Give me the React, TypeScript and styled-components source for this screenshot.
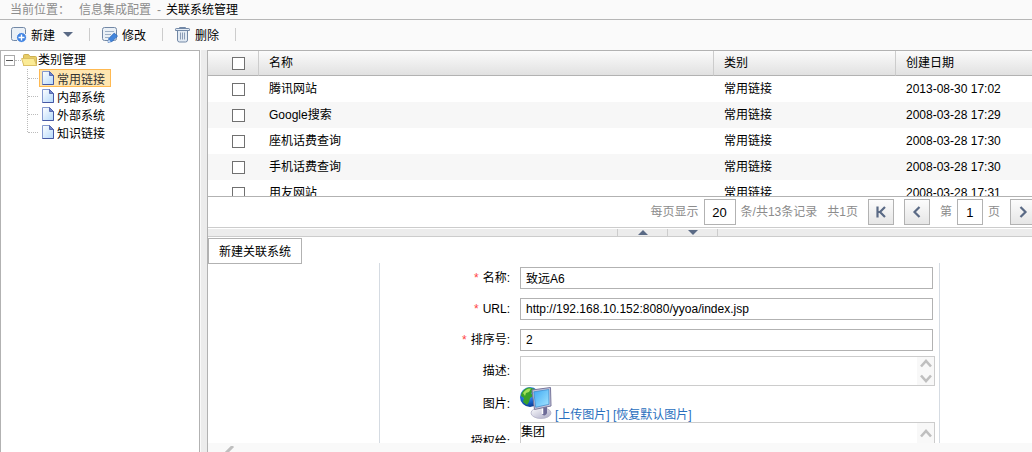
import React from "react";
import styled, { createGlobalStyle, css } from "styled-components";

const GlobalStyle = createGlobalStyle`
  * { box-sizing: border-box; }
  html, body { margin: 0; }
  body, button, input, textarea {
    font-family: "Liberation Sans", "Noto Sans CJK SC", sans-serif;
    font-size: 12px;
    color: #000;
  }
  button { padding: 0; border: 0; background: none; cursor: pointer; }
  svg { display: block; flex: none; }
`;

const Page = styled.div`
  display: flex;
  flex-direction: column;
  height: 100vh;
  overflow: hidden;
  background: #fafafa;
  line-height: 18px;
  white-space: nowrap;
`;

const Breadcrumb = styled.nav`
  display: flex;
  flex: none;
  align-items: center;
  height: 20px;
  padding-left: 10px;
  border-bottom: 1px solid #b6b6b6;
  color: #8c8c8c;
`;

const CrumbLink = styled.a`
  margin: 0 6px 0 9px;
  color: inherit;
  text-decoration: none;
`;

const CrumbCurrent = styled.span`
  margin-left: 5px;
  color: #000;
`;

const Toolbar = styled.div`
  display: flex;
  flex: none;
  align-items: center;
  height: 30px;
  padding: 0 0 2px 10px;
`;

const ToolButton = styled.button`
  display: flex;
  align-items: center;
  gap: 4px;
  height: 24px;
`;

const Caret = styled.span`
  margin-left: 4px;
  border: 5px solid transparent;
  border-top-color: #5a6a85;
  border-bottom: 0;
`;

const Divider = styled.span`
  width: 1px;
  height: 13px;
  margin: 0 11px 0 16px;
  background: #cccccc;
`;

const Body = styled.div`
  display: flex;
  flex: 1;
  min-height: 0;
`;

const Sidebar = styled.aside`
  flex: 0 0 200px;
  border: 1px solid #b2b2b2;
  border-bottom: 0;
  background: #fff;
`;

const TreeRoot = styled.div`
  display: flex;
  align-items: center;
  height: 18px;
  padding-left: 3px;
`;

const Toggle = styled.button`
  display: grid;
  place-items: center;
  width: 11px;
  height: 11px;
  border: 1px solid #aaa;
  background: #fff;
`;

const Stub = styled.span<{ $width: number }>`
  width: ${(p) => p.$width}px;
  border-top: 1px dotted #bbb;
`;

const TreeList = styled.ul`
  margin: 0;
  padding: 0 0 0 26px;
  list-style: none;
`;

const TreeItem = styled.li`
  display: flex;
  align-items: center;
  height: 18px;
  &::before {
    content: "";
    width: 1px;
    height: 18px;
    background: repeating-linear-gradient(#bbb 0 1px, transparent 1px 2px);
  }
  &:last-child::before {
    align-self: flex-start;
    height: 9px;
  }
`;

const TreeNode = styled.button<{ $active?: boolean }>`
  display: flex;
  align-items: center;
  gap: 3px;
  height: 18px;
  margin-left: 1px;
  padding: 0 5px 0 2px;
  border: 1px solid transparent;
  ${(p) =>
    p.$active &&
    css`
      border-color: #ffb951;
      background: #ffe6b0;
      color: #333;
    `}
`;

const Main = styled.main`
  display: flex;
  flex: 1;
  flex-direction: column;
  min-width: 0;
  margin-left: 1px;
  border-left: 6px solid #ececec;
`;

const Pane = styled.div`
  display: flex;
  flex: 1;
  flex-direction: column;
  min-height: 0;
  overflow: hidden;
  border-left: 1px solid #b2b2b2;
  background: #fff;
`;

const ListArea = styled.div`
  flex: 0 0 147px;
  overflow: hidden;
  border: solid #b2b2b2;
  border-width: 1px 0;
`;

const Table = styled.table`
  width: 100%;
  border-collapse: separate;
  border-spacing: 0;
  table-layout: fixed;
  text-align: left;
`;

const HeadCell = styled.th<{ $width?: number }>`
  width: ${(p) => (p.$width ? `${p.$width}px` : "auto")};
  height: 25px;
  padding: 0 0 1px 10px;
  border-right: 1px solid #cccccc;
  border-bottom: 1px solid #b2b2b2;
  background: linear-gradient(#fbfbfb, #e1e1e1);
  font-weight: normal;
  &:first-child { padding: 0 0 0 24px; }
  &:last-child { border-right: 0; }
`;

const Row = styled.tr`
  &:nth-child(even) { background: #f7f7f7; }
`;

const Cell = styled.td`
  height: 26px;
  padding: 0 0 1px 10px;
  &:first-child { padding: 0 0 0 24px; }
`;

const Check = styled.input`
  display: block;
  appearance: none;
  width: 13px;
  height: 13px;
  margin: 0;
  border: 1px solid #707070;
  background: #fff;
`;

const Pager = styled.div`
  display: flex;
  flex: none;
  align-items: center;
  justify-content: flex-end;
  height: 31px;
  margin-right: -4px;
  border-bottom: 1px solid #cccccc;
  color: #8c8c8c;
`;

const PagerText = styled.span`
  margin-right: 10px;
`;

const PagerInput = styled.input<{ $width: number }>`
  width: ${(p) => p.$width}px;
  height: 26px;
  margin: 0 5px;
  padding: 0;
  border: 1px solid #b2b2b2;
  background: #fff;
  font-size: 13px;
  text-align: center;
`;

const PagerButton = styled.button`
  display: grid;
  place-items: center;
  width: 26px;
  height: 26px;
  margin-right: 10px;
  border: 1px solid #b2b2b2;
  background: linear-gradient(#fcfcfc, #e6e6e6);
  &:last-child { margin-right: 0; }
`;

const Splitter = styled.div`
  display: grid;
  flex: none;
  grid-template-columns: 409fr 51px 50px 314fr;
  height: 8px;
  margin-top: 1px;
  border-bottom: 1px solid #cccccc;
  background: #ececec;
`;

const SplitButton = styled.button`
  display: grid;
  place-items: center;
  border-right: 1px solid #cccccc;
  &:nth-child(2) { border-left: 1px solid #cccccc; }
`;

const Arrow = styled.span<{ $up?: boolean }>`
  border: 5px solid transparent;
  ${(p) =>
    p.$up
      ? css`border-bottom-color: #5a6a85; border-top: 0;`
      : css`border-top-color: #5a6a85; border-bottom: 0;`}
`;

const TabStrip = styled.div`
  display: flex;
  flex: none;
  padding-top: 1px;
`;

const Tab = styled.button`
  height: 26px;
  margin-bottom: -1px;
  padding: 0 10px 2px;
  border: 1px solid #b2b2b2;
  background: #fff;
`;

const FormArea = styled.div`
  display: grid;
  flex: 1;
  grid-template-columns: 171fr 561px 92fr;
  min-height: 0;
  overflow: hidden;
`;

const Form = styled.form`
  grid-column: 2;
  border: solid #d5dbe2;
  border-width: 0 1px;
`;

const Field = styled.div`
  display: grid;
  grid-template-columns: 130px 415px;
  align-items: center;
  column-gap: 10px;
`;

const TextField = styled(Field)`
  padding: 4px 0 5px;
`;

const Label = styled.label`
  text-align: right;
`;

const Required = styled.span`
  margin-right: 4px;
  color: #f44;
`;

const TextInput = styled.input`
  height: 22px;
  margin-right: 2px;
  padding: 0 5px 1px;
  border: 1px solid #b2b2b2;
  background: #fff;
`;

const AreaBox = styled.div<{ $height: number }>`
  display: flex;
  height: ${(p) => p.$height}px;
  border: 1px solid #cccccc;
  background: #fff;
`;

const Area = styled.textarea`
  flex: 1;
  min-width: 0;
  padding: 0;
  border: 0;
  outline: 0;
  background: none;
  line-height: 18px;
  overflow: hidden;
  resize: none;
`;

const ScrollTrack = styled.span<{ $pad: number }>`
  display: flex;
  flex-direction: column;
  align-items: center;
  justify-content: space-between;
  width: 17px;
  padding: ${(p) => p.$pad}px 0;
  background: #f8f8f8;
`;

const Picture = styled.div`
  display: flex;
  align-items: flex-end;
  gap: 3px;
  height: 36px;
  padding-bottom: 3px;
`;

const Links = styled.span`
  margin-bottom: -5px;
`;

const Link = styled.a`
  color: #296fbe;
  text-decoration: none;
`;

const BottomBar = styled.div`
  flex: 0 0 9px;
  padding: 3px 0 0 16px;
  overflow: hidden;
  background: #f9f9f9;
`;

const BadgeAdd = () => (
  <svg width="17" height="17" viewBox="0 0 17 17">
    <rect x="1.5" y="1.5" width="14" height="13" rx="2" fill="#eaf0f6" stroke="#7288a6" />
    <circle cx="11.5" cy="11.5" r="5" fill="#3f83e3" stroke="#fafafa" />
    <path d="M11.5 8.5v6M8.5 11.5h6" stroke="#fff" strokeWidth="1.4" />
  </svg>
);

const EditIcon = () => (
  <svg width="17" height="17" viewBox="0 0 17 17">
    <rect x="1.5" y="1.5" width="14" height="13" rx="2" fill="#eaf0f6" stroke="#7288a6" />
    <path d="M4 5.5h9M4 8.5h6M4 11.5h4" stroke="#9db0c6" />
    <path d="M7 16.3l1-4 5.2-5.2 3.3 3L11 15.5z" fill="#4285dc" stroke="#2d68b6" strokeWidth=".8" />
    <path d="M7 16.3l.7-2.8 2 2z" fill="#dce9fa" />
  </svg>
);

const TrashIcon = () => (
  <svg width="17" height="17" viewBox="-1 0 17 17">
    <path d="M2.500 4.500h10v9.500a2 2 0 0 1-2 2h-6a2 2 0 0 1-2-2z" fill="#e3ebf4" stroke="#7288a6" />
    <path d="M5.500 6.500v7M7.500 6.500v7M9.500 6.500v7" stroke="#8a9cb6" />
    <path d="M.5 4.500V3.200c0-.4.3-.7.7-.7h12.600c.4 0 .7.3.7.7v1.300z" fill="#e3ebf4" stroke="#7288a6" />
    <path d="M4.500 2.500v-1h6v1" fill="none" stroke="#7288a6" />
  </svg>
);

const FolderIcon = () => (
  <svg width="17" height="14" viewBox="0 0 17 14">
    <path d="M2.500 12.500v-10c0-.6.4-1 1-1h4l1.500 2h5.500c.6 0 1 .4 1 1v8z" fill="#e8cd68" stroke="#cdb052" />
    <path d="M2.800 12.500L.6 5.500h12.400l2.600 7z" fill="#fbeb96" stroke="#dcc066" />
  </svg>
);

const FileIcon = () => (
  <svg width="12" height="14" viewBox="0 0 12 14">
    <defs>
      <linearGradient id="sheet" x1="0" y1="0" x2="1" y2="1">
        <stop offset="0" stopColor="#fff" />
        <stop offset="1" stopColor="#b4d8fa" />
      </linearGradient>
    </defs>
    <path d="M.5.5h7l4 4v9H.5z" fill="url(#sheet)" stroke="#8499cf" />
    <path d="M11.500 4.500v9H.5" fill="none" stroke="#4658a4" />
    <path d="M7.500.5l4 4h-4z" fill="#6f86cb" stroke="#4658a4" strokeWidth=".8" />
  </svg>
);

const Chevron = ({ up }: { up?: boolean }) => (
  <svg width="12" height="9" viewBox="0 0 12 9">
    <path d={up ? "M1 7.500l5-5.500 5 5.500" : "M1 1.500l5 5.500 5-5.500"} fill="none" stroke="#bfbfbf" strokeWidth="2.600" />
  </svg>
);

const PageArrow = ({ kind }: { kind: "first" | "prev" | "next" }) => (
  <svg width="12" height="12" viewBox="0 0 12 12" fill="none" stroke="#5a6a85" strokeWidth="2.200">
    {kind === "first" && <path d="M2.500 .5v11M10 1L5 6l5 5M3 6h3" />}
    {kind === "prev" && <path d="M8.500 1l-5 5 5 5" />}
    {kind === "next" && <path d="M3.500 1l5 5-5 5" />}
  </svg>
);

const NetworkIcon = () => (
  <svg width="32" height="32" viewBox="0 0 32 32">
    <defs>
      <radialGradient id="ocean" cx=".4" cy=".3" r=".75">
        <stop offset="0" stopColor="#62b6ff" />
        <stop offset=".6" stopColor="#1766cf" />
        <stop offset="1" stopColor="#0a3486" />
      </radialGradient>
      <linearGradient id="screen" x1="0" y1="0" x2="1" y2="1">
        <stop offset="0" stopColor="#3fa9f3" />
        <stop offset="1" stopColor="#a5e6ff" />
      </linearGradient>
      <linearGradient id="stand" x1="0" y1="0" x2="1" y2="1">
        <stop offset="0" stopColor="#fff" />
        <stop offset="1" stopColor="#a9a8c4" />
      </linearGradient>
    </defs>
    <circle cx="10" cy="10" r="10" fill="url(#ocean)" />
    <path d="M1 9C1 5 5 1 9 .5L15 2l-2 3-2 1 2 3-3 2-1 4-2 3-4-3 1-4z" fill="#38a12b" />
    <path d="M3 6C5 3 8 1 11 1.500L9 5 6 6 5 9z" fill="#a3e25a" />
    <ellipse cx="21" cy="26" rx="10" ry="5.500" fill="url(#stand)" stroke="#b2b1c6" strokeWidth=".8" />
    <path d="M22 20l5-1v7c-1 3-4 3-5 1z" fill="#6e6c98" />
    <path d="M22.500 20v7" stroke="#fff" strokeWidth="1.500" />
    <path d="M12 3L30.500.5l.5 18.500-16.500 3.500z" fill="#c6c6dc" stroke="#77769b" />
    <path d="M13.800 4.800L28.800 2.500l.2 14.800-13.300 3z" fill="url(#screen)" stroke="#3687cb" strokeWidth=".7" />
  </svg>
);

const nodes = ["常用链接", "内部系统", "外部系统", "知识链接"];

const records = [
  { name: "腾讯网站", date: "2013-08-30 17:02" },
  { name: "Google搜索", date: "2008-03-28 17:29" },
  { name: "座机话费查询", date: "2008-03-28 17:30" },
  { name: "手机话费查询", date: "2008-03-28 17:30" },
  { name: "用友网站", date: "2008-03-28 17:31" },
];

const fields = [
  { id: "name", label: "名称:", value: "致远A6" },
  { id: "url", label: "URL:", value: "http://192.168.10.152:8080/yyoa/index.jsp" },
  { id: "order", label: "排序号:", value: "2" },
];

export default function App() {
  return (
    <Page>
      <GlobalStyle />
      <Breadcrumb>
        <span>当前位置：</span>
        <CrumbLink href="#">信息集成配置</CrumbLink>
        <span>-</span>
        <CrumbCurrent>关联系统管理</CrumbCurrent>
      </Breadcrumb>
      <Toolbar>
        <ToolButton type="button">
          <BadgeAdd />
          新建
          <Caret />
        </ToolButton>
        <Divider />
        <ToolButton type="button">
          <EditIcon />
          修改
        </ToolButton>
        <Divider />
        <ToolButton type="button">
          <TrashIcon />
          删除
        </ToolButton>
        <Divider />
      </Toolbar>
      <Body>
        <Sidebar>
          <TreeRoot>
            <Toggle type="button" aria-label="折叠">
              <svg width="7" height="1" viewBox="0 0 7 1">
                <path d="M0 .5h7" stroke="#555" />
              </svg>
            </Toggle>
            <Stub $width={6} />
            <FolderIcon />
            <span>类别管理</span>
          </TreeRoot>
          <TreeList>
            {nodes.map((node, i) => (
              <TreeItem key={node}>
                <Stub $width={10} />
                <TreeNode type="button" $active={i === 0}>
                  <FileIcon />
                  {node}
                </TreeNode>
              </TreeItem>
            ))}
          </TreeList>
        </Sidebar>
        <Main>
          <Pane>
            <ListArea>
              <Table>
                <thead>
                  <tr>
                    <HeadCell $width={51}>
                      <Check type="checkbox" aria-label="全选" />
                    </HeadCell>
                    <HeadCell>名称</HeadCell>
                    <HeadCell $width={182}>类别</HeadCell>
                    <HeadCell $width={136}>创建日期</HeadCell>
                  </tr>
                </thead>
                <tbody>
                  {records.map((r) => (
                    <Row key={r.name}>
                      <Cell>
                        <Check type="checkbox" aria-label={r.name} />
                      </Cell>
                      <Cell>{r.name}</Cell>
                      <Cell>常用链接</Cell>
                      <Cell>{r.date}</Cell>
                    </Row>
                  ))}
                </tbody>
              </Table>
            </ListArea>
            <Pager>
              <label htmlFor="size">每页显示</label>
              <PagerInput id="size" $width={32} defaultValue="20" />
              <PagerText>条/共13条记录</PagerText>
              <PagerText>共1页</PagerText>
              <PagerButton type="button" aria-label="首页">
                <PageArrow kind="first" />
              </PagerButton>
              <PagerButton type="button" aria-label="上一页">
                <PageArrow kind="prev" />
              </PagerButton>
              <label htmlFor="page">第</label>
              <PagerInput id="page" $width={26} defaultValue="1" />
              <PagerText>页</PagerText>
              <PagerButton type="button" aria-label="下一页">
                <PageArrow kind="next" />
              </PagerButton>
            </Pager>
            <Splitter>
              <span />
              <SplitButton type="button" aria-label="向上">
                <Arrow $up />
              </SplitButton>
              <SplitButton type="button" aria-label="向下">
                <Arrow />
              </SplitButton>
            </Splitter>
            <TabStrip>
              <Tab type="button">新建关联系统</Tab>
            </TabStrip>
            <FormArea>
              <Form>
                {fields.map((f) => (
                  <TextField key={f.id}>
                    <Label htmlFor={f.id}>
                      <Required>*</Required>
                      {f.label}
                    </Label>
                    <TextInput id={f.id} defaultValue={f.value} />
                  </TextField>
                ))}
                <Field>
                  <Label htmlFor="desc">描述:</Label>
                  <AreaBox $height={30}>
                    <Area id="desc" />
                    <ScrollTrack $pad={2}>
                      <Chevron up />
                      <Chevron />
                    </ScrollTrack>
                  </AreaBox>
                </Field>
                <Field>
                  <Label as="span">图片:</Label>
                  <Picture>
                    <NetworkIcon />
                    <Links>
                      <Link href="#">[上传图片]</Link> <Link href="#">[恢复默认图片]</Link>
                    </Links>
                  </Picture>
                </Field>
                <Field>
                  <Label htmlFor="grant">授权给:</Label>
                  <AreaBox $height={40}>
                    <Area id="grant" defaultValue="集团" />
                    <ScrollTrack $pad={6}>
                      <Chevron up />
                      <Chevron />
                    </ScrollTrack>
                  </AreaBox>
                </Field>
              </Form>
            </FormArea>
            <BottomBar>
              <svg width="12" height="12" viewBox="0 0 12 12">
                <path d="M9 0L2 7l5 5" fill="none" stroke="#bfbfbf" strokeWidth="3" />
              </svg>
            </BottomBar>
          </Pane>
        </Main>
      </Body>
    </Page>
  );
}
